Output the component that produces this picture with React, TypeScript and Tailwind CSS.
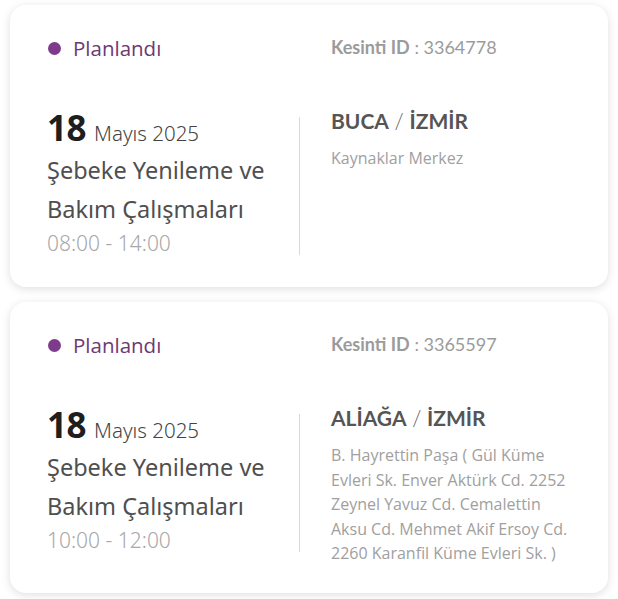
const outages = [
  {
    id: '3364778',
    day: '18',
    month: 'Mayıs 2025',
    title: ['Şebeke Yenileme ve', 'Bakım Çalışmaları'],
    time: '08:00 - 14:00',
    district: 'BUCA',
    city: 'İZMİR',
    area: 'Kaynaklar Merkez',
  },
  {
    id: '3365597',
    day: '18',
    month: 'Mayıs 2025',
    title: ['Şebeke Yenileme ve', 'Bakım Çalışmaları'],
    time: '10:00 - 12:00',
    district: 'ALİAĞA',
    city: 'İZMİR',
    area: 'B. Hayrettin Paşa ( Gül Küme Evleri Sk. Enver Aktürk Cd. 2252 Zeynel Yavuz Cd. Cemalettin Aksu Cd. Mehmet Akif Ersoy Cd. 2260 Karanfil Küme Evleri Sk. )',
  },
];

type Outage = (typeof outages)[number];

function OutageCard({ o }: { o: Outage }) {
  return (
    <div className="bg-white rounded-[16px] shadow-[0_2px_10px_rgba(0,0,0,0.13)] pl-[37px] pr-[30px] pt-[29px] pb-[27px]">
      {/* header */}
      <div className="flex items-center">
        <div className="w-[253px] flex items-center font-['Open_Sans',sans-serif]">
          <span className="w-[13px] h-[13px] rounded-full bg-[#7e3b8c] ml-[1px]" />
          <span className="ml-[12px] text-[20.5px] leading-[28px] text-[#6d3972]">Planlandı</span>
        </div>
        <div className="pl-[31px] font-['Lato',sans-serif] text-[18px] leading-[24px] text-[#9b9b9b] -mt-[3px]">
          <span className="font-bold">Kesinti ID</span> : {o.id}
        </div>
      </div>

      {/* body */}
      <div className="flex items-start mt-[48px]">
        <div className="relative w-[253px] shrink-0 font-['Noto_Sans',sans-serif] pt-[1px] pb-[3px]">
          <span className="absolute right-0 top-[7px] bottom-[5px] w-px bg-[#d9d9d9]" />
          <div className="flex items-baseline leading-[34px]">
            <span className="text-[35px] font-bold text-[#1e1e1e] tracking-[-0.5px]">{o.day}</span>
            <span className="ml-[8px] text-[20.5px] font-light text-[#444]">{o.month}</span>
          </div>
          <div className="mt-[1px] text-[23.5px] leading-[39px] text-[#4f4f4f]">
            {o.title.map((t) => (
              <div key={t}>{t}</div>
            ))}
          </div>
          <div className="text-[21px] leading-[28px] font-light text-[#a8a8a8]">{o.time}</div>
        </div>
        <div className="pl-[31px] -mt-[4px]">
          <div className="font-['Lato',sans-serif] text-[21px] leading-[30px] text-[#555]">
            <span className="font-bold">{o.district}</span>
            <span className="font-light"> / </span>
            <span className="font-bold">{o.city}</span>
          </div>
          <div className="mt-[10px] font-['Open_Sans',sans-serif] text-[16px] leading-[24.5px] text-[#a0a0a0] max-w-[240px]">{o.area}</div>
        </div>
      </div>
    </div>
  );
}

export default function App() {
  return (
    <div className="w-[618px] h-[599px] bg-white px-[10px] pt-[5px] flex flex-col gap-[15px] overflow-hidden">
      {outages.map((o) => (
        <OutageCard key={o.id} o={o} />
      ))}
    </div>
  );
}
